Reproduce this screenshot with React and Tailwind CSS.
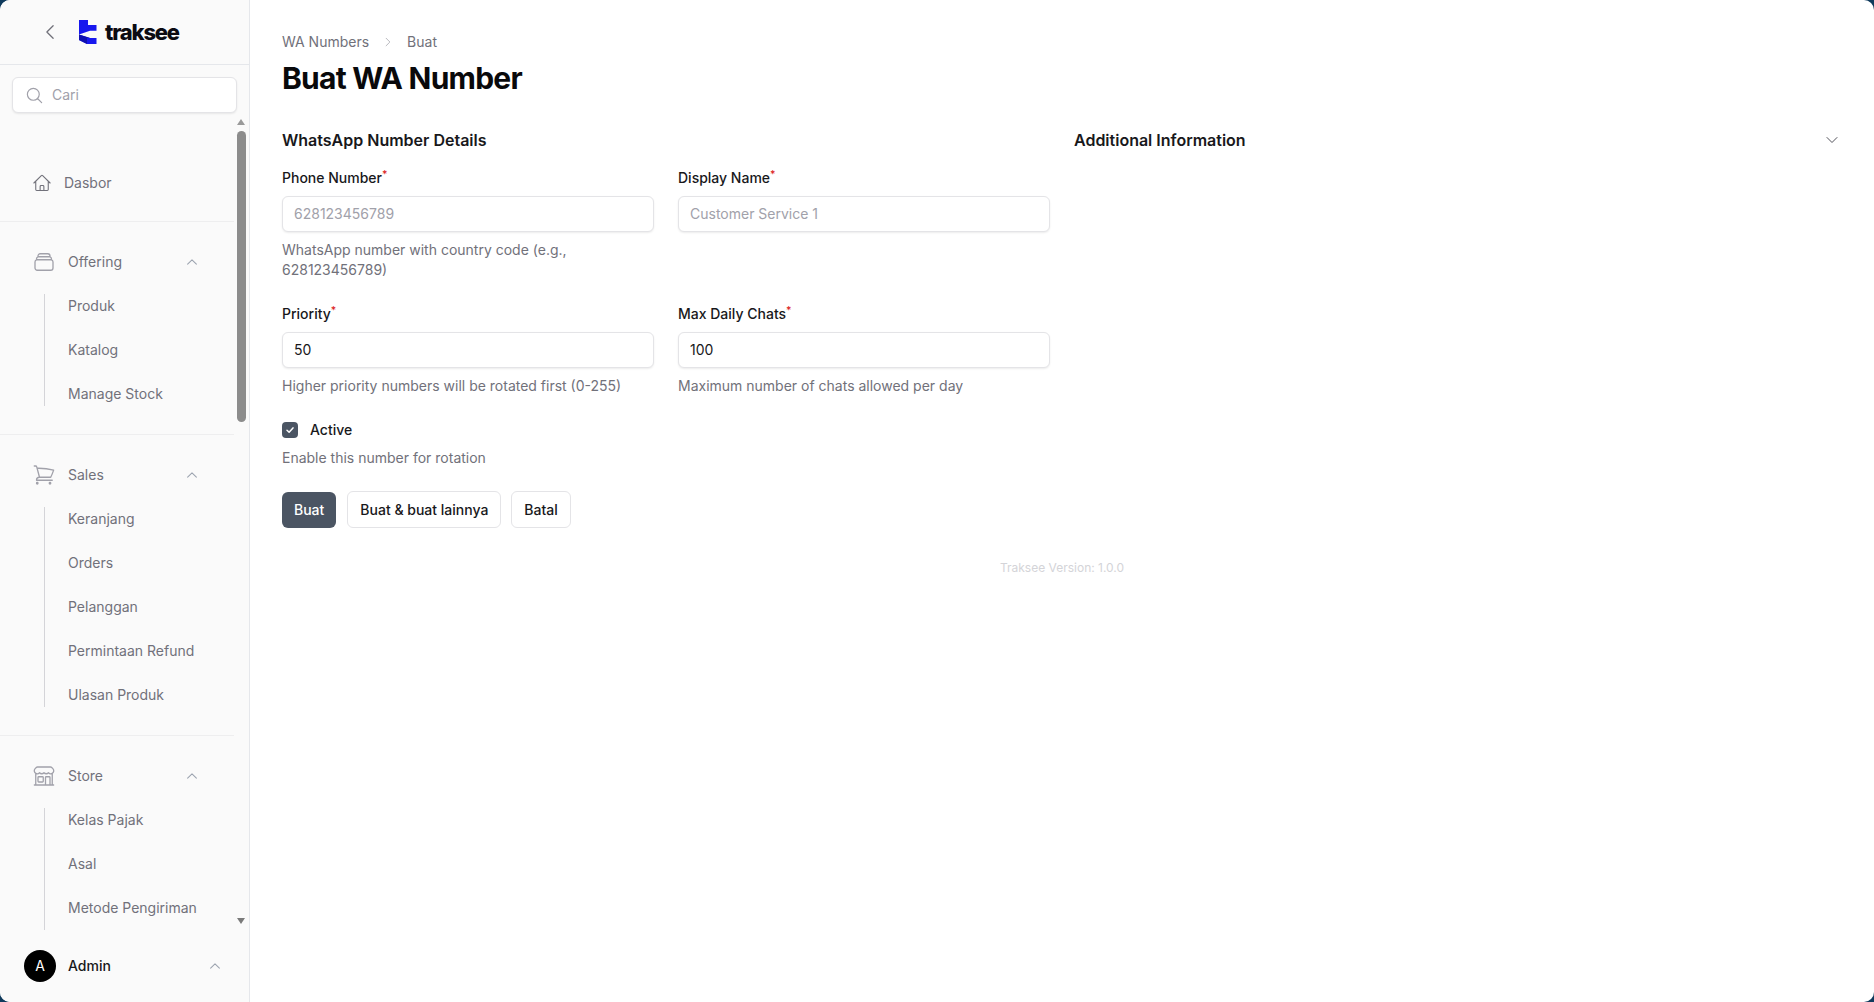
import React from "react";
import {
  HiOutlineHome,
  HiOutlineRectangleStack,
  HiOutlineShoppingCart,
  HiOutlineBuildingStorefront,
  HiOutlineChevronUp,
  HiOutlineChevronDown,
  HiOutlineChevronLeft,
  HiOutlineChevronRight,
  HiOutlineMagnifyingGlass,
} from "react-icons/hi2";

const font = { fontFamily: "Inter, sans-serif" };

function Logo() {
  return (
    <div className="flex items-center gap-[8px]">
      <svg width="18" height="24" viewBox="0 0 18 24" className="block">
        <path d="M0 0h9v5h8.5v5.7H11L0 14.5z" fill="#1717ee" />
        <path d="M0 14.5 11 18h6.5v6H8L0 20z" fill="#1717ee" />
        <path d="M0 14.5 11 18 8 18v6L0 20z" fill="#0f0fb0" />
      </svg>
      <span className="text-[22px] font-extrabold leading-none tracking-[-1.2px] text-[#0b0b12]">traksee</span>
    </div>
  );
}

function NavGroup({ icon: Icon, title, items, last }) {
  return (
    <div className={last ? "pt-[26px]" : "border-b border-[#eeeeef] pt-[26px] pb-[28px]"}>
      <div className="flex h-[28px] items-center pl-[32px] pr-[35px]">
        <Icon className="h-[24px] w-[24px] text-[#a1a1aa]" strokeWidth={1.3} />
        <span className="ml-[12px] flex-1 text-sm text-[#71717a]">{title}</span>
        <HiOutlineChevronUp className="h-[14px] w-[14px] text-[#9ca3af]" strokeWidth={1.8} />
      </div>
      <div className={`ml-[44px] mt-[18px] flex flex-col gap-[20px] border-l border-[#d4d4d8] pl-[23px] ${last ? "pb-[40px]" : ""}`}>
        {items.map((t) => (
          <div key={t} className="flex h-[24px] items-center text-sm text-[#71717a]">
            {t}
          </div>
        ))}
      </div>
    </div>
  );
}

function Label({ children }) {
  return (
    <div className="text-sm font-medium leading-5 text-[#18181b]">
      {children}
      <sup className="text-[#dc2626]">*</sup>
    </div>
  );
}

function Field({ label, placeholder, value, help }) {
  return (
    <div>
      <Label>{label}</Label>
      <div className="mt-[8px] flex h-[36px] items-center rounded-md border border-[#e4e4e7] bg-white px-[11px] text-sm shadow-[0_1px_2px_rgba(0,0,0,0.08)]">
        {value ? <span className="text-[#18181b]">{value}</span> : <span className="text-[#a1a1aa]">{placeholder}</span>}
      </div>
      {help && <p className="mt-[8px] text-sm leading-[20px] text-[#71717a]">{help}</p>}
    </div>
  );
}

export default function App() {
  return (
    <div className="h-[1002px] w-[1874px] overflow-hidden bg-[#0f3a5c]" style={font}>
      <div className="flex h-full w-full overflow-hidden rounded-[10px] bg-white">
        <aside className="flex h-full w-[250px] shrink-0 flex-col border-r border-[#e5e7eb] bg-[#fafafa]">
          <div className="flex h-[65px] shrink-0 items-center gap-[19px] border-b border-[#e5e7eb] pl-[40px]">
            <HiOutlineChevronLeft className="h-[20px] w-[20px] text-[#71717a]" strokeWidth={1.5} />
            <Logo />
          </div>
          <div className="px-[12px] pt-[12px]">
            <div className="flex h-[36px] w-[225px] items-center rounded-md border border-[#e4e4e7] bg-white pl-[12px] text-sm text-[#a1a1aa] shadow-[0_1px_2px_rgba(0,0,0,0.08)]">
              <HiOutlineMagnifyingGlass className="h-[19px] w-[19px]" strokeWidth={1.5} />
              <span className="ml-[8px]">Cari</span>
            </div>
          </div>
          <div className="flex min-h-0 flex-1 pt-[4px]">
            <nav className="w-[234px] shrink-0 overflow-hidden pt-[52px]">
              <div className="flex h-[28px] items-center pl-[32px] text-sm text-[#71717a]">
                <HiOutlineHome className="h-[20px] w-[20px] text-[#71717a]" strokeWidth={1.3} />
                <span className="ml-[12px]">Dasbor</span>
              </div>
              <div className="mt-[24px] border-b border-[#eeeeef]" />
              <NavGroup icon={HiOutlineRectangleStack} title="Offering" items={["Produk", "Katalog", "Manage Stock"]} />
              <NavGroup icon={HiOutlineShoppingCart} title="Sales" items={["Keranjang", "Orders", "Pelanggan", "Permintaan Refund", "Ulasan Produk"]} />
              <NavGroup icon={HiOutlineBuildingStorefront} title="Store" items={["Kelas Pajak", "Asal", "Metode Pengiriman"]} last />
            </nav>
            <div className="flex w-[14px] shrink-0 flex-col items-center pt-[2px] pb-[6px]">
              <div className="h-0 w-0 border-x-[4px] border-b-[6px] border-x-transparent border-b-[#9a9a9a]" />
              <div className="mt-[6px] h-[291px] w-[9px] rounded-full bg-[#8c8c8c]" />
              <div className="flex-1" />
              <div className="h-0 w-0 border-x-[4px] border-t-[6px] border-x-transparent border-t-[#7a7a7a]" />
            </div>
          </div>
          <div className="flex h-[72px] shrink-0 items-center pl-[24px] pr-[27px]">
            <div className="flex h-[32px] w-[32px] items-center justify-center rounded-full bg-black text-sm text-white">A</div>
            <span className="ml-[12px] flex-1 text-sm font-medium text-[#18181b]">Admin</span>
            <HiOutlineChevronUp className="h-[14px] w-[14px] text-[#9ca3af]" strokeWidth={1.8} />
          </div>
        </aside>

        <main className="min-w-0 flex-1 px-[32px] pt-[32px]">
          <div className="flex h-[20px] items-center text-sm text-[#71717a]">
            <span>WA Numbers</span>
            <HiOutlineChevronRight className="mx-[13px] h-[12px] w-[12px] text-[#a1a1aa]" strokeWidth={1.5} />
            <span>Buat</span>
          </div>
          <h1 className="mt-[8px] text-[30px] font-bold leading-[36px] tracking-[-0.75px] text-[#09090b]">Buat WA Number</h1>

          <div className="mt-[32px] grid grid-cols-2 gap-x-[24px]">
            <section>
              <h2 className="text-base font-semibold leading-[24px] text-[#18181b]">WhatsApp Number Details</h2>
              <div className="mt-[16px] grid grid-cols-2 gap-x-[24px] gap-y-[24px]">
                <Field label="Phone Number" placeholder="628123456789" help="WhatsApp number with country code (e.g., 628123456789)" />
                <Field label="Display Name" placeholder="Customer Service 1" />
                <Field label="Priority" value="50" help="Higher priority numbers will be rotated first (0-255)" />
                <Field label="Max Daily Chats" value="100" help="Maximum number of chats allowed per day" />
              </div>
              <div className="mt-[24px] flex h-[20px] items-center gap-[12px]">
                <div className="flex h-[16px] w-[16px] items-center justify-center rounded-[4px] bg-[#4b5563]">
                  <svg width="10" height="10" viewBox="0 0 10 10" fill="none">
                    <path d="M2 5.3 4.1 7.3 8 2.9" stroke="white" strokeWidth="1.5" strokeLinecap="round" strokeLinejoin="round" />
                  </svg>
                </div>
                <span className="text-sm font-medium text-[#18181b]">Active</span>
              </div>
              <p className="mt-[8px] text-sm leading-[20px] text-[#71717a]">Enable this number for rotation</p>
              <div className="mt-[23px] flex items-center gap-[10px]">
                <button className="h-[36px] rounded-md bg-[#4b5563] px-[12px] text-sm font-medium text-white">Buat</button>
                <button className="ml-px h-[37px] rounded-md border border-[#e4e4e7] bg-white px-[12px] text-sm font-medium text-[#18181b]">Buat &amp; buat lainnya</button>
                <button className="h-[37px] rounded-md border border-[#e4e4e7] bg-white px-[12px] text-sm font-medium text-[#18181b]">Batal</button>
              </div>
            </section>
            <section>
              <div className="flex h-[24px] items-center justify-between">
                <h2 className="text-base font-semibold text-[#18181b]">Additional Information</h2>
                <HiOutlineChevronDown className="mr-[2px] h-[16px] w-[16px] text-[#52525b]" strokeWidth={1.5} />
              </div>
            </section>
          </div>

          <p className="mt-[32px] text-center text-xs leading-[16px] text-[#d4d4d8]">Traksee Version: 1.0.0</p>
        </main>
      </div>
    </div>
  );
}
